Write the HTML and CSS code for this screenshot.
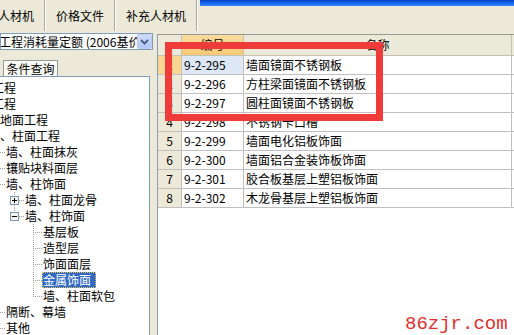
FILE: index.html
```html
<!DOCTYPE html>
<html lang="zh-CN">
<head>
    <meta charset="UTF-8">
    <title>定额查询</title>
    <link rel="stylesheet" href="styles.css">
</head>
<body>
<div class="window">
    <div class="topbar">
        <div class="tabs">
            <div class="tab first">人材机</div>
            <div class="tab">价格文件</div>
            <div class="tab">补充人材机</div>
        </div>
        <div class="titlestrip"></div>
    </div>

    <div class="main">
        <div class="left">
            <div class="combo">
                <span class="combo-text">工程消耗量定额 (2006基价)</span>
                <span class="combo-btn">
                    <svg width="11" height="8" viewBox="0 0 11 8"><path d="M2 2 L5.5 5.5 L9 2" fill="none" stroke="#4d6185" stroke-width="2"/></svg>
                </span>
            </div>

            <div class="subtabs">
                <div class="subtab">条件查询</div>
            </div>

            <div class="tree">
                <div class="node"><span class="label l0-short">工程</span></div>
                <div class="node"><span class="label l0-short">工程</span></div>
                <div class="node"><span class="label l0">楼地面工程</span></div>
                <div class="node"><span class="label l0">墙、柱面工程</span></div>

                <div class="node">
                    <svg class="guide" width="5" height="16"><path class="dot" d="M0 8.5H5"/></svg>
                    <span class="label">墙、柱面抹灰</span>
                </div>
                <div class="node">
                    <svg class="guide" width="5" height="16"><path class="dot" d="M0 8.5H5"/></svg>
                    <span class="label">镶贴块料面层</span>
                </div>
                <div class="node">
                    <svg class="guide" width="5" height="16"><path class="dot" d="M0 8.5H5"/></svg>
                    <span class="label">墙、柱饰面</span>
                </div>

                <div class="node">
                    <svg class="guide" width="24" height="16">
                        <path class="dot" d="M14.5 0V4M14.5 13V16M19 8.5H24"/>
                        <rect class="box" x="10.5" y="4.5" width="8" height="8"/>
                        <path class="sign" d="M12 8.5H17M14.5 6V11"/>
                    </svg>
                    <span class="label">墙、柱面龙骨</span>
                </div>
                <div class="node">
                    <svg class="guide" width="24" height="16">
                        <path class="dot" d="M14.5 0V4M19 8.5H24"/>
                        <rect class="box" x="10.5" y="4.5" width="8" height="8"/>
                        <path class="sign" d="M12 8.5H17"/>
                    </svg>
                    <span class="label">墙、柱饰面</span>
                </div>

                <div class="node">
                    <svg class="guide" width="42" height="16"><path class="dot" d="M33.5 0V16M35 8.5H42"/></svg>
                    <span class="label leaf">基层板</span>
                </div>
                <div class="node">
                    <svg class="guide" width="42" height="16"><path class="dot" d="M33.5 0V16M35 8.5H42"/></svg>
                    <span class="label leaf">造型层</span>
                </div>
                <div class="node">
                    <svg class="guide" width="42" height="16"><path class="dot" d="M33.5 0V16M35 8.5H42"/></svg>
                    <span class="label leaf">饰面面层</span>
                </div>
                <div class="node">
                    <svg class="guide" width="42" height="16"><path class="dot" d="M33.5 0V16M35 8.5H42"/></svg>
                    <span class="label leaf selected">金属饰面</span>
                </div>
                <div class="node">
                    <svg class="guide" width="42" height="16"><path class="dot" d="M33.5 0V9M35 8.5H42"/></svg>
                    <span class="label leaf">墙、柱面软包</span>
                </div>

                <div class="node">
                    <svg class="guide" width="5" height="16"><path class="dot" d="M0 8.5H5"/></svg>
                    <span class="label">隔断、幕墙</span>
                </div>
                <div class="node">
                    <svg class="guide" width="5" height="16"><path class="dot" d="M0 8.5H5"/></svg>
                    <span class="label">其他</span>
                </div>
            </div>
        </div>

        <div class="grid">
            <div class="grow ghead">
                <div class="rh"></div>
                <div class="c-code hsel">编号</div>
                <div class="c-name">名称</div>
            </div>
            <div class="grow current">
                <div class="rh">1</div>
                <div class="c-code">9-2-295</div>
                <div class="c-name">墙面镜面不锈钢板</div>
            </div>
            <div class="grow">
                <div class="rh">2</div>
                <div class="c-code">9-2-296</div>
                <div class="c-name">方柱梁面镜面不锈钢板</div>
            </div>
            <div class="grow">
                <div class="rh">3</div>
                <div class="c-code">9-2-297</div>
                <div class="c-name">圆柱面镜面不锈钢板</div>
            </div>
            <div class="grow">
                <div class="rh">4</div>
                <div class="c-code">9-2-298</div>
                <div class="c-name">不锈钢卡口槽</div>
            </div>
            <div class="grow">
                <div class="rh">5</div>
                <div class="c-code">9-2-299</div>
                <div class="c-name">墙面电化铝板饰面</div>
            </div>
            <div class="grow">
                <div class="rh">6</div>
                <div class="c-code">9-2-300</div>
                <div class="c-name">墙面铝合金装饰板饰面</div>
            </div>
            <div class="grow">
                <div class="rh">7</div>
                <div class="c-code">9-2-301</div>
                <div class="c-name">胶合板基层上塑铝板饰面</div>
            </div>
            <div class="grow">
                <div class="rh">8</div>
                <div class="c-code">9-2-302</div>
                <div class="c-name">木龙骨基层上塑铝板饰面</div>
            </div>
        </div>
    </div>

    <!-- red marker drawn over the grid -->
    <div class="highlight"></div>
    <div class="watermark">86zjr.com</div>
</div>
</body>
</html>
```

FILE: styles.css
```css
* {
    box-sizing: border-box;
}

body {
    margin: 0;
    width: 514px;
    height: 335px;
    overflow: hidden;
    background: #ece9d8;
    font-family: "Noto Sans CJK SC", "Liberation Sans", sans-serif;
    font-size: 12px;
    color: #000;
}

.window {
    position: relative;
    width: 514px;
    height: 335px;
    overflow: hidden;
}

/* top tab strip */
.topbar {
    display: flex;
    height: 33px;
}

.tabs {
    display: flex;
    height: 31px;
}

.tab {
    padding: 0 10px 0 11px;
    line-height: 31px;
    white-space: nowrap;
    border-right: 1px solid #aca899;
    box-shadow: 1px 0 0 #fff;
}

.tab.first {
    margin-left: -13px;
}

.titlestrip {
    flex: 1;
    height: 6px;
    margin-left: 3px;
    background: linear-gradient(#0842c8, #1a6cf0 60%, #3d86f4);
}

/* main area */
.main {
    display: flex;
    height: 302px;
}

.left {
    width: 157px;
    display: flex;
    flex-direction: column;
}

.combo {
    width: 153px;
    height: 17px;
    border: 1px solid #7f9db9;
    background: #fff;
    display: flex;
    overflow: hidden;
}

.combo-text {
    flex: 1;
    overflow: hidden;
    white-space: nowrap;
    line-height: 15px;
    margin-left: -2px;
}

.combo-btn {
    width: 15px;
    height: 15px;
    flex: none;
    display: flex;
    align-items: center;
    justify-content: center;
    background: linear-gradient(#cddbfc, #b3c7f6);
    border: 1px solid #bccbf0;
    border-radius: 2px;
}

.subtabs {
    margin-top: 10px;
    height: 16px;
    padding-left: 3px;
    display: flex;
}

.subtab {
    width: 55px;
    height: 16px;
    border: 1px solid #919b9c;
    border-bottom: none;
    background: #fbfbf7;
    text-align: center;
    line-height: 15px;
}

.tree {
    width: 150px;
    flex: 1;
    background: #fff;
    border-top: 1px solid #7f9db9;
    border-right: 1px solid #7f9db9;
    padding-top: 3px;
    overflow: hidden;
}

.node {
    display: flex;
    align-items: center;
    height: 16px;
    white-space: nowrap;
}

.guide {
    flex: none;
    display: block;
}

.dot {
    fill: none;
    stroke: #a0a0a0;
    stroke-width: 1;
    stroke-dasharray: 1 1;
    shape-rendering: crispEdges;
}

.box {
    fill: #f4f4f0;
    stroke: #7f94b0;
    shape-rendering: crispEdges;
}

.sign {
    stroke: #000;
    stroke-width: 1;
    shape-rendering: crispEdges;
}

.label {
    line-height: 16px;
    padding-left: 1px;
}

.l0 {
    margin-left: -13px;
}

.l0-short {
    margin-left: -9px;
}

.leaf {
    padding: 0 5px 0 1px;
    height: 16px;
}

.selected {
    background: #316ac5;
    color: #fff;
    outline: 1px dotted #e8c35a;
    outline-offset: -1px;
}

/* data grid */
.grid {
    flex: 1;
    margin-top: 1px;
    background: #fff;
    border-left: 1px solid #8c9cb5;
    border-top: 1px solid #9a9a9a;
    display: flex;
    flex-direction: column;
}

.grow {
    display: flex;
    height: 19px;
    line-height: 18px;
    white-space: nowrap;
    border-bottom: 1px solid #c0c0c0;
}

.ghead {
    height: 21px;
    line-height: 20px;
    background: #ebe9d8;
    border-bottom: 1px solid #c5c2b2;
}

.rh {
    width: 24px;
    flex: none;
    text-align: center;
    background: #ece9d8;
    border-right: 1px solid #c5c2b2;
}

.c-code {
    width: 62px;
    flex: none;
    padding-left: 2px;
    border-right: 1px solid #c0c0c0;
}

.c-name {
    width: 268px;
    flex: none;
    padding-left: 2px;
    border-right: 1px solid #c0c0c0;
    overflow: hidden;
}

.ghead .c-code,
.ghead .c-name {
    text-align: center;
    padding-left: 0;
    border-right-color: #c5c2b2;
}

.hsel {
    background: linear-gradient(#fadc9e, #f6c977);
}

.current .rh {
    background: #f8d590;
}

.current .c-code {
    background: #dde7f5;
}

/* overlays */
.highlight {
    position: absolute;
    left: 165px;
    top: 42px;
    width: 218px;
    height: 79px;
    border: 7px solid #f03b3b;
}

.watermark {
    position: absolute;
    left: 405px;
    top: 315px;
    font-family: "Liberation Mono", monospace;
    font-size: 19px;
    line-height: 19px;
    color: #e0302c;
}
```
